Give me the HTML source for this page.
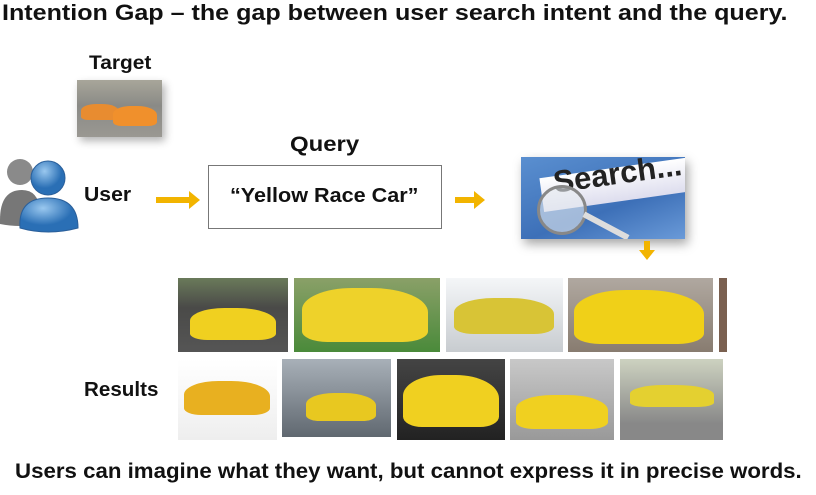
<!DOCTYPE html>
<html><head><style>
body{margin:0;width:816px;height:495px;background:#fff;position:relative;overflow:hidden;font-family:"Liberation Sans",Arial,sans-serif;font-weight:bold;color:#111}
.a{position:absolute}
.t{position:absolute;white-space:nowrap;transform-origin:0 0;transform:scaleX(1.1)}
.img{position:absolute;overflow:hidden}
.car{position:absolute;background:#f0d020;border-radius:40% 45% 20% 20%}
.arr{position:absolute;height:6px;background:#f2b400}
.arr:after{content:"";position:absolute;right:-10px;top:-6px;border-left:11px solid #f2b400;border-top:9px solid transparent;border-bottom:9px solid transparent}
</style></head><body>
<div class="t" style="left:2px;top:0px;font-size:22px;transform:scaleX(1.14)">Intention Gap – the gap between user search intent and the query.</div>
<div class="t" style="left:89px;top:53px;font-size:19px">Target</div>
<div class="img" style="left:77px;top:80px;width:85px;height:57px;background:linear-gradient(#a8a69a,#8a8a86 45%,#9a9892);box-shadow:3px 4px 8px rgba(0,0,0,.3)">
<div class="car" style="left:4px;top:24px;width:38px;height:16px;background:#e88c30"></div>
<div class="car" style="left:36px;top:26px;width:44px;height:20px;background:#f0902c"></div></div>
<svg class="a" style="left:0;top:150px" width="82" height="84" viewBox="0 0 82 84">
<defs><radialGradient id="g1" cx=".4" cy=".3"><stop offset="0" stop-color="#9ac8ef"/><stop offset="1" stop-color="#2a6fb5"/></radialGradient></defs>
<circle cx="20" cy="22" r="13" fill="#8a8a8a"/><path d="M0 70 Q0 40 22 40 Q38 40 40 60 L40 74 Q20 78 0 74Z" fill="#777"/>
<circle cx="48" cy="28" r="17" fill="url(#g1)" stroke="#2a5f9a"/>
<path d="M20 78 Q18 48 48 48 Q78 48 78 78 Q48 86 20 78Z" fill="url(#g1)" stroke="#2a5f9a"/></svg>
<div class="t" style="left:84px;top:184px;font-size:20px;transform:scaleX(1.06)">User</div>
<div class="arr" style="left:156px;top:197px;width:34px"></div>
<div class="t" style="left:290px;top:133px;font-size:21px;transform:scaleX(1.14)">Query</div>
<div class="a" style="left:208px;top:165px;width:234px;height:64px;border:1px solid #777;box-sizing:border-box"></div>
<div class="t" style="left:230px;top:185px;font-size:20px;transform:scaleX(1.08)">“Yellow Race Car”</div>
<div class="arr" style="left:455px;top:197px;width:20px"></div>
<div class="img" style="left:521px;top:157px;width:164px;height:82px;background:linear-gradient(160deg,#5a8fd0,#3d70b8 60%,#6a9ad8);box-shadow:3px 5px 10px rgba(0,0,0,.35)">
<div class="a" style="left:20px;top:10px;width:160px;height:34px;background:linear-gradient(#fff,#dde);transform:rotate(-8deg)"></div>
<div class="t" style="left:30px;top:8px;font-size:31px;color:#222;transform:rotate(-8deg)">Search...</div>
<div class="a" style="left:16px;top:28px;width:44px;height:44px;border-radius:50%;border:3px solid #888;background:rgba(230,235,240,.6)"></div>
<div class="a" style="left:60px;top:66px;width:50px;height:6px;background:#ddd;transform:rotate(28deg)"></div></div>
<div class="a" style="left:644px;top:241px;width:6px;height:10px;background:#f2b400"></div>
<div class="a" style="left:639px;top:250px;border-top:10px solid #f2b400;border-left:8px solid transparent;border-right:8px solid transparent"></div>
<div class="img" style="left:178px;top:278px;width:110px;height:74px;background:linear-gradient(#6a7a5a,#4a4a48 40%,#555)"><div class="car" style="left:12px;top:30px;width:86px;height:32px"></div></div>
<div class="img" style="left:294px;top:278px;width:146px;height:74px;background:linear-gradient(#8aa068,#4a8a3a)"><div class="car" style="left:8px;top:10px;width:126px;height:54px;background:#eed22a"></div></div>
<div class="img" style="left:446px;top:278px;width:117px;height:74px;background:linear-gradient(#f4f6f8,#c8ccd0)"><div class="car" style="left:8px;top:20px;width:100px;height:36px;background:#d8c436"></div></div>
<div class="img" style="left:568px;top:278px;width:145px;height:74px;background:linear-gradient(#b0a8a0,#887c70)"><div class="car" style="left:6px;top:12px;width:130px;height:54px;background:#f0d018"></div></div>
<div class="img" style="left:719px;top:278px;width:8px;height:74px;background:#7a6050"></div>
<div class="t" style="left:84px;top:379px;font-size:20px;transform:scaleX(1.03)">Results</div>
<div class="img" style="left:178px;top:359px;width:99px;height:81px;background:linear-gradient(#fff,#eee)"><div class="car" style="left:6px;top:22px;width:86px;height:34px;background:#e8b020"></div></div>
<div class="img" style="left:282px;top:359px;width:109px;height:78px;background:linear-gradient(#a8b0b8,#606870)"><div class="car" style="left:24px;top:34px;width:70px;height:28px;background:#e8c820"></div></div>
<div class="img" style="left:397px;top:359px;width:108px;height:81px;background:linear-gradient(#444,#222)"><div class="car" style="left:6px;top:16px;width:96px;height:52px"></div></div>
<div class="img" style="left:510px;top:359px;width:104px;height:81px;background:linear-gradient(#c8c8c8,#999)"><div class="car" style="left:6px;top:36px;width:92px;height:34px"></div></div>
<div class="img" style="left:620px;top:359px;width:103px;height:81px;background:linear-gradient(#cdd2c0,#888 80%)"><div class="car" style="left:10px;top:26px;width:84px;height:22px;background:#e4d030"></div></div>
<div class="t" style="left:15px;top:460px;font-size:21px;transform:scaleX(1.06)">Users can imagine what they want, but cannot express it in precise words.</div>
</body></html>
